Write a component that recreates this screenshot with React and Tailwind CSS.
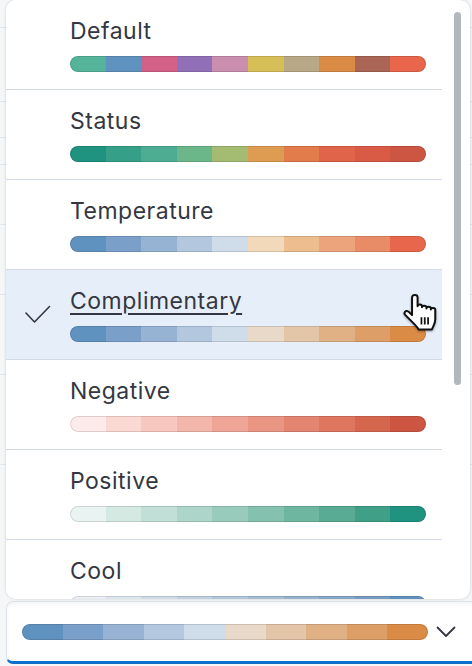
import React from "react";

const palettes = [
  { name: "Default", colors: ["#54b399", "#6092c0", "#d36086", "#9170b8", "#ca8eae", "#d6bf57", "#b9a888", "#da8b45", "#aa6556", "#e7664c"] },
  { name: "Status", colors: ["#209280", "#35a087", "#4dad92", "#6bb78a", "#a4bb72", "#dd9c52", "#e27c4a", "#e0644a", "#d95b46", "#cc5642"] },
  { name: "Temperature", colors: ["#6092c0", "#7aa0c9", "#96b3d3", "#b3c8df", "#cfdce9", "#f2d9b9", "#edbd90", "#eba47c", "#e88b67", "#e7664c"] },
  { name: "Complimentary", colors: ["#6092c0", "#7aa0c9", "#96b3d3", "#b3c8df", "#cfdce9", "#e9d9c9", "#e3c5a8", "#e0b185", "#de9e67", "#da8b45"], selected: true },
  { name: "Negative", colors: ["#fdeaea", "#fbd9d3", "#f7c8c0", "#f3b6ab", "#efa697", "#ea9684", "#e48572", "#de7660", "#d6674f", "#cc5642"] },
  { name: "Positive", colors: ["#e9f3f1", "#d5e9e3", "#c1dfd6", "#add5c9", "#99cbbc", "#85c1af", "#6fb6a1", "#5aab94", "#3f9f87", "#209280"] },
  { name: "Cool", colors: ["#ebeff5", "#dde5ee", "#cfdbe8", "#c1d1e1", "#b3c7da", "#a4bdd3", "#95b3cd", "#86a8c7", "#779dc2", "#6092c0"] },
];

function Bar({ colors, width }) {
  return (
    <div
      className="relative flex h-[16px] rounded-full overflow-hidden after:absolute after:inset-0 after:rounded-full after:shadow-[inset_0_0_0_1px_rgba(0,0,0,0.12)] after:content-['']"
      style={{ width }}
    >
      {colors.map((c, i) => (
        <div key={i} className="flex-1 h-full" style={{ backgroundColor: c }} />
      ))}
    </div>
  );
}

function Check() {
  return (
    <svg width="26" height="20" viewBox="0 0 26 20" fill="none">
      <path d="M1 8 L9.5 17 L24.5 1.5" stroke="#343741" strokeWidth="1.6" strokeLinecap="round" strokeLinejoin="round" />
    </svg>
  );
}

function HandCursor() {
  return (
    <svg width="38" height="42" viewBox="0 0 34 38" className="drop-shadow-[0_1px_1px_rgba(0,0,0,0.35)]">
      <path
        d="M8 4 C8 1 13 1 13 4 L13 12 C13 10 17 10 17 12 L17 13 C17 11 21 11 21 13 L21 14 C21 12 25 12 25 14 L25 15 C25 13 29 13 29 15 L29 24 C29 28 27 30 26 33 L14 33 C13 31 11 29 9 27 L2 20 C0 18 2 15 5 17 L8 20 Z"
        fill="#ffffff"
        stroke="#111111"
        strokeWidth="1.8"
        strokeLinejoin="round"
      />
      <path d="M16.5 22 L16.5 28.5 M19.5 22 L19.5 28.5 M22.5 22 L22.5 28.5" stroke="#111111" strokeWidth="1.6" />
    </svg>
  );
}

function Row({ p }) {
  return (
    <div
      className={
        "relative flex h-[90px] shrink-0 border-b border-[#d3dae6] " +
        (p.selected ? "bg-[#e6eff9]" : "bg-white")
      }
    >
      <div className="w-[64px] flex items-start justify-start pt-[35px] pl-[19px]">
        {p.selected ? <Check /> : null}
      </div>
      <div className="flex flex-col pt-[17px]">
        <div
          className={
            "text-[23px] leading-[28px] tracking-[0.5px] text-[#343741] " +
            (p.selected ? "underline decoration-[1.5px] underline-offset-[4px]" : "")
          }
        >
          {p.name}
        </div>
        <div className="mt-[11px]">
          <Bar colors={p.colors} width={356} />
        </div>
      </div>
      {p.selected ? (
        <div className="absolute left-[397px] top-[23px]">
          <HandCursor />
        </div>
      ) : null}
    </div>
  );
}

export default function App() {
  const selected = palettes[3];
  return (
    <div className="relative w-[472px] h-[666px] overflow-hidden bg-white font-['Inter','Noto_Sans',sans-serif]">
      {/* underlying page, mostly hidden */}
      <div className="absolute inset-0 bg-[#f5f6f8] flex flex-col">
        <div className="h-[28px] border-b border-[#e3e6ec]" />
        <div className="h-[74px] border-b border-[#e3e6ec]" />
        <div className="h-[36px] border-b border-[#e3e6ec]" />
        <div className="h-[27px] border-b border-[#e3e6ec]" />
        <div className="h-[60px] border-b border-[#e3e6ec]" />
        <div className="h-[70px] border-b border-[#e3e6ec]" />
        <div className="h-[80px] border-b border-[#e3e6ec]" />
        <div className="h-[90px] border-b border-[#e3e6ec]" />
      </div>

      {/* popover list */}
      <div className="absolute left-[6px] top-0 w-[464px] h-[599px] bg-white rounded-[10px] shadow-[0_0_3px_rgba(0,0,0,0.18)] overflow-hidden flex">
        <div className="w-[436px] flex flex-col">
          {palettes.map((p) => (
            <Row key={p.name} p={p} />
          ))}
        </div>
        <div className="flex-1 pt-[12px] pl-[12px]">
          <div className="w-[7px] h-[373px] rounded-full bg-[#b3b7be]" />
        </div>
      </div>

      {/* select trigger */}
      <div className="absolute left-[6px] top-[601px] w-[480px] h-[63px] bg-white rounded-[7px] border border-[#dfe2ea] border-b-[3px] border-b-[#0b6fcc] shadow-[inset_0_2px_4px_rgba(0,0,0,0.05)] flex items-center pl-[15px]">
        <Bar colors={selected.colors} width={406} />
        <svg width="20" height="12" viewBox="0 0 20 12" fill="none" className="ml-[8px]">
          <path d="M1.5 1.5 L10 10 L18.5 1.5" stroke="#343741" strokeWidth="1.8" strokeLinecap="round" strokeLinejoin="round" />
        </svg>
      </div>
    </div>
  );
}
